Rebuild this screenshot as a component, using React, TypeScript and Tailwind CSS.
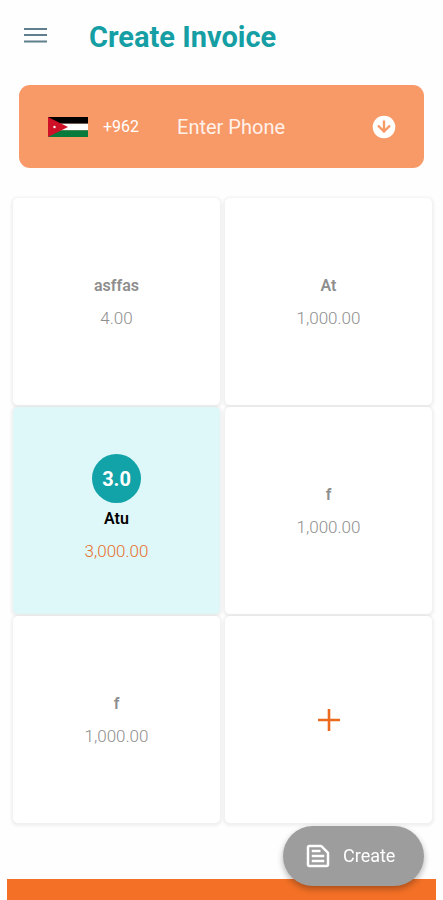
import { useState } from "react";
import clsx from "clsx";

interface Item {
  id: number;
  name: string;
  price: string;
  quantity?: string;
}

const items: Item[] = [
  { id: 1, name: "asffas", price: "4.00" },
  { id: 2, name: "At", price: "1,000.00" },
  { id: 3, name: "Atu", price: "3,000.00", quantity: "3.0" },
  { id: 4, name: "f", price: "1,000.00" },
  { id: 5, name: "f", price: "1,000.00" },
];

const tileClass =
  "flex aspect-square flex-col items-center justify-center rounded-[5px] shadow-[0_1px_3px_2px_rgba(0,0,0,0.06)]";

function MenuIcon() {
  return (
    <svg viewBox="0 0 24 18" className="h-[18px] w-6" fill="#5f7f8c" aria-hidden="true">
      <path d="M1 0h23v2H1zM1 6h23v2H1zM1 12.5h23v2H1z" />
    </svg>
  );
}

function JordanFlag() {
  return (
    <svg viewBox="0 0 40 20" className="h-5 w-10 shrink-0" role="img" aria-label="Jordan">
      <path fill="#000" d="M0 0h40v6.67H0z" />
      <path fill="#fff" d="M0 6.67h40v6.67H0z" />
      <path fill="#087a3c" d="M0 13.33h40V20H0z" />
      <path fill="#ce1126" d="M0 0l20 10L0 20z" />
      <circle cx="6.5" cy="10" r="1.2" fill="#fff" />
    </svg>
  );
}

function ArrowDownIcon() {
  return (
    <svg viewBox="0 0 24 24" className="size-6" aria-hidden="true">
      <circle cx="12" cy="12" r="11.3" fill="#fff" />
      <path
        d="M12 5.5v11M6 10.5l6 6 6-6"
        fill="none"
        stroke="#f89968"
        strokeWidth="2.4"
      />
    </svg>
  );
}

function SnippetIcon() {
  return (
    <svg viewBox="0 0 24 24" className="size-[30px]" fill="currentColor" aria-hidden="true">
      <path d="M14.17 5 19 9.83V19H5V5h9.17m0-2H5c-1.1 0-2 .9-2 2v14c0 1.1.9 2 2 2h14c1.1 0 2-.9 2-2V9.83c0-.53-.21-1.04-.59-1.41l-4.83-4.83c-.37-.38-.88-.59-1.41-.59zM7 15h10v2H7v-2zm0-4h10v2H7v-2zm0-4h7v2H7V7z" />
    </svg>
  );
}

function ItemTile({ item }: { item: Item }) {
  const selected = Boolean(item.quantity);

  return (
    <button
      type="button"
      aria-pressed={selected}
      className={clsx(tileClass, selected ? "bg-[#def7f8]" : "bg-white")}
    >
      {selected && (
        <span className="flex size-[49px] items-center justify-center rounded-full bg-[#12a3a9] text-xl font-bold text-white">
          {item.quantity}
        </span>
      )}
      <span
        className={clsx(
          "text-base leading-8 font-semibold",
          selected ? "text-black" : "text-[#8e8e8e]"
        )}
      >
        {item.name}
      </span>
      <span
        className={clsx(
          "text-[17px] leading-8 font-light",
          selected ? "text-[#e8702e]" : "text-[#8e8e8e]"
        )}
      >
        {item.price}
      </span>
    </button>
  );
}

export default function App() {
  const [phone, setPhone] = useState("");

  return (
    <div className="flex min-h-screen flex-col bg-[#fefefe] font-[Roboto,sans-serif]">
      <header className="flex h-[73px] items-center gap-[42px] px-[23px]">
        <button type="button" aria-label="Menu">
          <MenuIcon />
        </button>
        <h1 className="text-[29px] leading-9 font-bold text-[#159fa5]">Create Invoice</h1>
      </header>

      <div className="mx-[19px] mt-3 flex h-[83px] items-center rounded-[11px] bg-[#f89968] pr-7 pl-[29px] text-white">
        <JordanFlag />
        <span className="ml-[15px] text-base">+962</span>
        <input
          type="tel"
          aria-label="Phone"
          placeholder="Enter Phone"
          value={phone}
          onChange={(e) => setPhone(e.target.value)}
          className="ml-[38px] min-w-0 flex-1 bg-transparent text-xl outline-none placeholder:text-[#fff1ea]"
        />
        <button type="button" aria-label="Choose contact">
          <ArrowDownIcon />
        </button>
      </div>

      <main className="mt-[30px] grid grid-cols-2 gap-x-[5px] gap-y-[2px] pr-[11px] pl-[13px]">
        {items.map((item) => (
          <ItemTile key={item.id} item={item} />
        ))}
        <button type="button" aria-label="Add item" className={clsx(tileClass, "bg-white")}>
          <svg viewBox="0 0 22 22" className="size-[22px]" stroke="#ec6a20" strokeWidth="2.6">
            <path d="M11 0v22M0 11h22" />
          </svg>
        </button>
      </main>

      <footer className="mx-[7px] mt-14 min-h-5 flex-1 bg-[#f37026]" />

      <button
        type="button"
        className="fixed right-[19px] bottom-[14px] flex h-[60px] w-[141px] items-center gap-[10px] rounded-full bg-[#9d9d9d] pl-5 text-lg text-white shadow-[0_3px_6px_rgba(0,0,0,0.3)]"
      >
        <SnippetIcon />
        Create
      </button>
    </div>
  );
}
